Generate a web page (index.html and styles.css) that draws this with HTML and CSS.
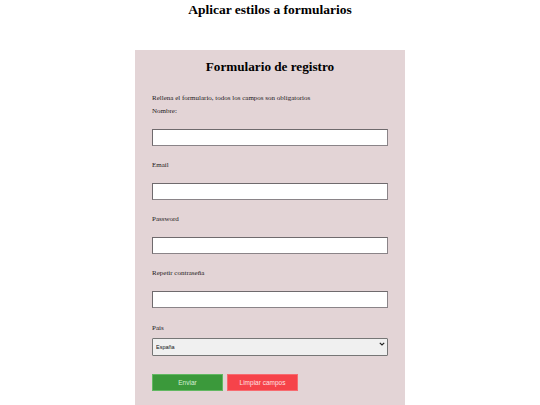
FILE: index.html
```html
<!DOCTYPE html>
<html lang="es">
<head>
<meta charset="utf-8">
<title>Aplicar estilos a formularios</title>
<link rel="stylesheet" href="styles.css">
</head>
<body>
<h1 class="page-title">Aplicar estilos a formularios</h1>
<form class="reg-form">
  <h2 class="form-title">Formulario de registro</h2>
  <p class="intro">Rellena el formulario, todos los campos son obligatorios</p>
  <label class="field-label" for="nombre">Nombre:</label>
  <input class="text-input" id="nombre" type="text">
  <label class="field-label" for="email">Email</label>
  <input class="text-input" id="email" type="email">
  <label class="field-label" for="pass">Password</label>
  <input class="text-input" id="pass" type="password">
  <label class="field-label" for="pass2">Repetir contraseña</label>
  <input class="text-input" id="pass2" type="password">
  <label class="field-label pais-label" for="pais">Pais</label>
  <div class="select-wrap">
    <select class="select-input" id="pais">
      <option>España</option>
      <option>México</option>
      <option>Argentina</option>
    </select>
    <svg class="chevron" width="6" height="4" viewBox="0 0 6 4"><path d="M0.8 0.8 L3 3 L5.2 0.8" fill="none" stroke="#222" stroke-width="1.2"/></svg>
  </div>
  <div class="buttons">
    <button type="submit" class="btn btn-send">Enviar</button>
    <button type="reset" class="btn btn-reset">Limpiar campos</button>
  </div>
</form>
</body>
</html>
```

FILE: styles.css
```css
html, body {
  margin: 0;
  padding: 0;
  background: #ffffff;
}
body {
  font-family: "Liberation Serif", "Times New Roman", serif;
  color: #1e1a1b;
}
.page-title {
  margin: 2px 0 0;
  font-size: 13.5px;
  line-height: 16px;
  text-align: center;
  color: #000;
}
.reg-form {
  width: 236px;
  margin: 32px auto 0;
  padding: 9px 17px 20px;
  background: #e3d4d6;
  display: flex;
  flex-direction: column;
}
.form-title {
  margin: 0;
  font-size: 13.2px;
  line-height: 16px;
  text-align: center;
  color: #000;
}
.intro {
  margin: 18px 0 0;
  font-size: 7px;
  line-height: 10px;
}
.field-label {
  display: block;
  font-size: 7px;
  line-height: 10px;
  margin-bottom: 13px;
}
.intro + .field-label {
  margin-top: 3px;
}
.text-input {
  box-sizing: border-box;
  width: 236px;
  height: 17px;
  margin: 0 0 14px;
  padding: 0 3px;
  border: 1px solid #8a8488;
  border-top-color: #6f6a6d;
  border-left-color: #6f6a6d;
  background: #fff;
  font-size: 7px;
}
.pais-label {
  margin-top: 1px;
  margin-bottom: 2px;
}
.select-wrap {
  position: relative;
  width: 236px;
  height: 18px;
}
.select-input {
  appearance: none;
  -webkit-appearance: none;
  box-sizing: border-box;
  width: 100%;
  height: 18px;
  margin: 0;
  padding: 0 3px;
  border: 1px solid #767676;
  border-radius: 1px;
  background: #f0f0f0;
  font-family: "Liberation Sans", Arial, sans-serif;
  font-size: 5.5px;
  color: #111;
}
.chevron {
  position: absolute;
  right: 3px;
  top: 7px;
  pointer-events: none;
}
.buttons {
  display: flex;
  gap: 4px;
  margin-top: 21px;
}
.btn {
  width: 71px;
  height: 17px;
  padding: 0;
  font-family: "Liberation Sans", Arial, sans-serif;
  font-size: 6.5px;
  cursor: pointer;
}
.btn-send {
  background: #3b993b;
  border: 1px solid #62b862;
  color: #d6efd6;
}
.btn-reset {
  background: #f6434a;
  border: 1px solid #f76b70;
  color: #fde0e1;
}
```
